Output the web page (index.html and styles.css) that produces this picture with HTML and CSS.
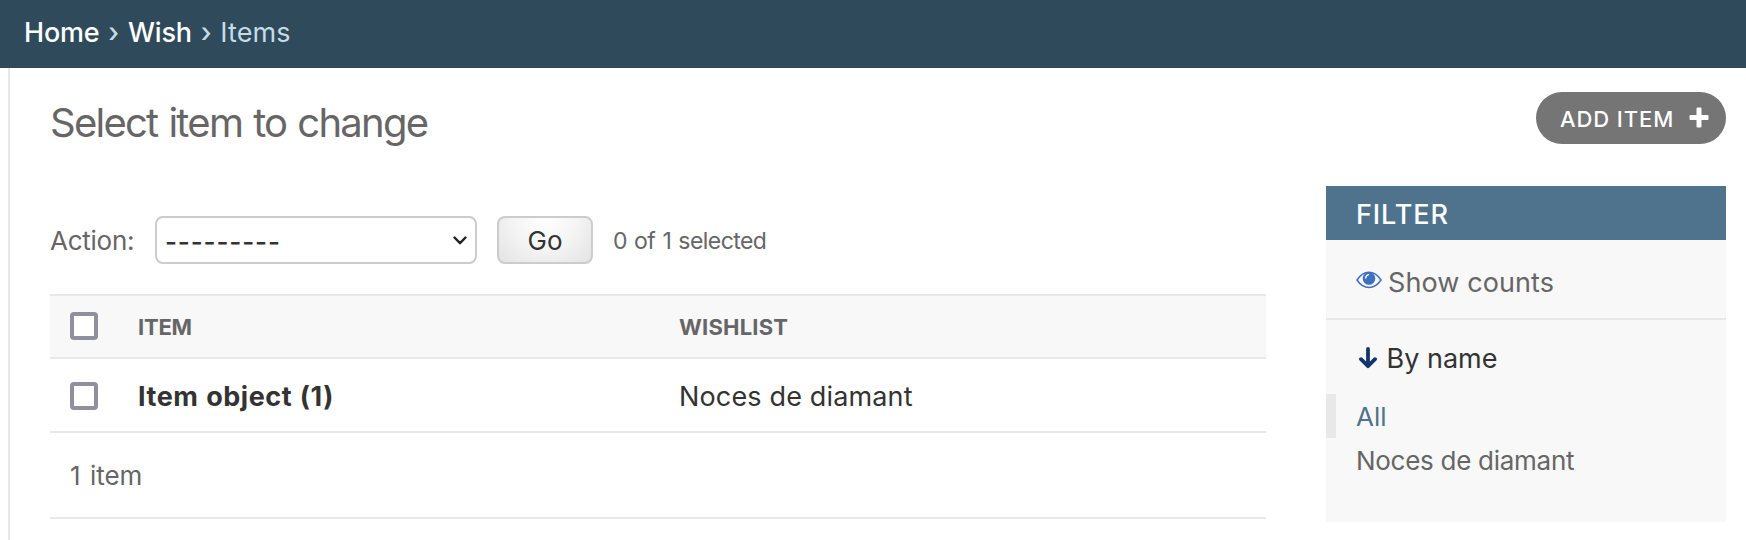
FILE: index.html
```html
<!DOCTYPE html>
<html lang="en">
<head>
<meta charset="utf-8">
<title>Select item to change</title>
<link rel="stylesheet" href="styles.css">
</head>
<body>
<nav class="breadcrumbs"><a class="crumb home">Home</a><span class="sep">›</span><a class="crumb wish">Wish</a><span class="sep">›</span><span class="current">Items</span></nav>
<div class="shell">
  <main class="content">
    <header class="top">
      <h1 class="title"><span>Select item to change</span></h1>
      <a class="add"><span class="add-label">ADD ITEM</span><svg class="plus" viewBox="0 0 20 21"><path d="M8.500 0.500h3q1 0 1 1V8h6q1 0 1 1v3q0 1-1 1h-6v6.500q0 1-1 1h-3q-1 0-1-1V13h-6q-1 0-1-1V9q0-1 1-1h6V1.500q0-1 1-1z" fill="#fff"/></svg></a>
    </header>
    <div class="columns">
      <section class="list">
        <div class="actions">
          <label class="action-label"><span>Action:</span></label>
          <div class="select"><span class="dashes">---------</span><svg class="chevron" viewBox="0 0 14 9"><path d="M1.500 1.500L7 7.200L12.500 1.500" fill="none" stroke="#222" stroke-width="2.400" stroke-linecap="round" stroke-linejoin="round"/></svg></div>
          <button class="go"><span>Go</span></button>
          <span class="count">0 of 1 selected</span>
        </div>
        <div class="row head"><span class="box"></span><span class="cell th item">ITEM</span><span class="th wishlist">WISHLIST</span></div>
        <div class="row body"><span class="box"></span><span class="cell"><b class="object">Item object (1)</b></span><span class="value">Noces de diamant</span></div>
        <div class="paginator"><span>1 item</span></div>
      </section>
      <aside class="filter">
        <h2 class="filter-head"><span>FILTER</span></h2>
        <div class="counts"><svg class="eye" viewBox="0 0 26 18"><path d="M1 9Q6 1.200 13 1.200T25 9Q20 16.500 13 16.500T1 9z" fill="#f8f8f8" stroke="#3e6fc0" stroke-width="1.500"/><circle cx="13" cy="7.500" r="6.300" fill="#3e6fc0"/><path d="M9.700 7Q9.900 4.200 12.600 3.700" fill="none" stroke="#fff" stroke-width="1.300" stroke-linecap="round"/></svg><span class="counts-text">Show counts</span></div>
        <div class="by"><svg class="arrow" viewBox="0 0 18 22"><path d="M9 2V19M2 12.200L9 19.200L16 12.200" fill="none" stroke="#13356b" stroke-width="3.800" stroke-linecap="round" stroke-linejoin="round"/></svg><span class="by-text">By name</span></div>
        <div class="choice selected"><span class="all">All</span></div>
        <div class="choice"><span class="noces">Noces de diamant</span></div>
      </aside>
    </div>
  </main>
</div>
</body>
</html>
```

FILE: styles.css
```css
* { box-sizing: border-box; }
body { margin: 0; height: 540px; overflow: hidden; background: #fff; color: #666; font-family: Inter, "Liberation Sans", sans-serif; font-weight: 400; display: flex; flex-direction: column; }
span, b, a { white-space: nowrap; }
svg { flex: none; display: block; }
.breadcrumbs { height: 68px; flex: none; background: #2f4a5b; color: #c4dce8; display: flex; align-items: center; padding: 0 0 4px 24px; font-size: 27px; }
.crumb { color: #fff; font-weight: 500; letter-spacing: -0.2px; }
.current { letter-spacing: 0.1px; }
.sep { width: 28.5px; text-align: center; font-weight: 500; }
.shell { flex: 1; padding-left: 8px; }
.content { height: 472px; border-left: 2px solid #e8e8e8; padding: 24px 20px 0 40px; }
.top { height: 94px; display: flex; justify-content: space-between; align-items: flex-start; }
.title { margin: 0; font-size: 40px; line-height: 62px; font-weight: 400; letter-spacing: -1.75px; word-spacing: 1.5px; }
.add { width: 190px; height: 52px; border-radius: 26px; background: #757575; color: #fff; display: flex; align-items: center; padding: 0 17px 0 24px; justify-content: space-between; font-size: 22px; }
.add-label { font-weight: 500; letter-spacing: 0.9px; padding-top: 2px; }
.plus { width: 20px; height: 21px; margin-bottom: 2px; }
.columns { display: flex; justify-content: space-between; align-items: flex-start; }
.list { width: 1216px; padding-top: 30px; }
.actions { height: 48px; margin-bottom: 30px; display: flex; align-items: center; }
.action-label { width: 105px; font-size: 26px; letter-spacing: -0.25px; }
.select { width: 322px; height: 48px; border: 2px solid #ccc; border-radius: 8px; display: flex; align-items: center; justify-content: space-between; padding: 0 8px; color: #333; font-size: 26px; }
.dashes { font-weight: 500; letter-spacing: 0.85px; padding-top: 2px; }
.chevron { width: 14px; height: 9px; margin-top: 1px; }
.go { margin: 0 20px; width: 96px; height: 48px; padding: 0; border: 2px solid #ccc; border-radius: 8px; background: radial-gradient(ellipse at 50% 0, #fdfdfd 10%, #f4f4f4 50%, #e3e3e3 100%); color: #333; font: 400 26px Inter, sans-serif; }
.count { font-size: 23px; letter-spacing: -0.55px; word-spacing: 1.2px; padding-top: 2px; }
.row { display: flex; align-items: center; padding-left: 20px; border-bottom: 2px solid #e8e8e8; }
.head { height: 65px; border-top: 2px solid #e8e8e8; background: #f8f8f8; }
.head .box { margin-bottom: 2px; }
.body { height: 74px; padding-top: 2px; color: #333; font-size: 27px; }
.box { width: 28px; height: 28px; border: 4px solid #8f8f9d; border-radius: 4px; background: #fff; flex: none; }
.cell { margin-left: 40px; width: 541px; }
.th { font-size: 22px; font-weight: 650; }
.item { letter-spacing: -0.2px; }
.wishlist { letter-spacing: 0.2px; }
.object { font-weight: 650; letter-spacing: 0.55px; word-spacing: 0.7px; }
.value { letter-spacing: 0.15px; }
.paginator { height: 86px; border-bottom: 2px solid #e8e8e8; display: flex; align-items: center; padding-left: 20px; font-size: 26px; word-spacing: 2px; }
.filter { width: 400px; height: 336px; background: #f8f8f8; font-size: 27px; }
.filter-head { margin: 0; height: 54px; padding: 2px 0 0 30px; display: flex; align-items: center; background: #4f738d; color: #fff; font-size: 27px; font-weight: 500; letter-spacing: 0.9px; }
.counts { height: 80px; border-bottom: 2px solid #e8e8e8; display: flex; align-items: center; padding: 2px 0 0 30px; }
.counts-text { padding-top: 5px; letter-spacing: 0.1px; }
.eye { width: 26px; height: 18px; margin-right: 6px; }
.by { height: 74px; padding: 2px 0 0 33px; display: flex; align-items: center; color: #333; }
.arrow { width: 18px; height: 22px; margin-right: 9.5px; }
.choice { height: 44px; padding-left: 30px; display: flex; align-items: center; font-size: 26px; letter-spacing: -0.28px; }
.selected { border-left: 10px solid #e8e8e8; padding-left: 20px; color: #4f738d; letter-spacing: 0; }
```
